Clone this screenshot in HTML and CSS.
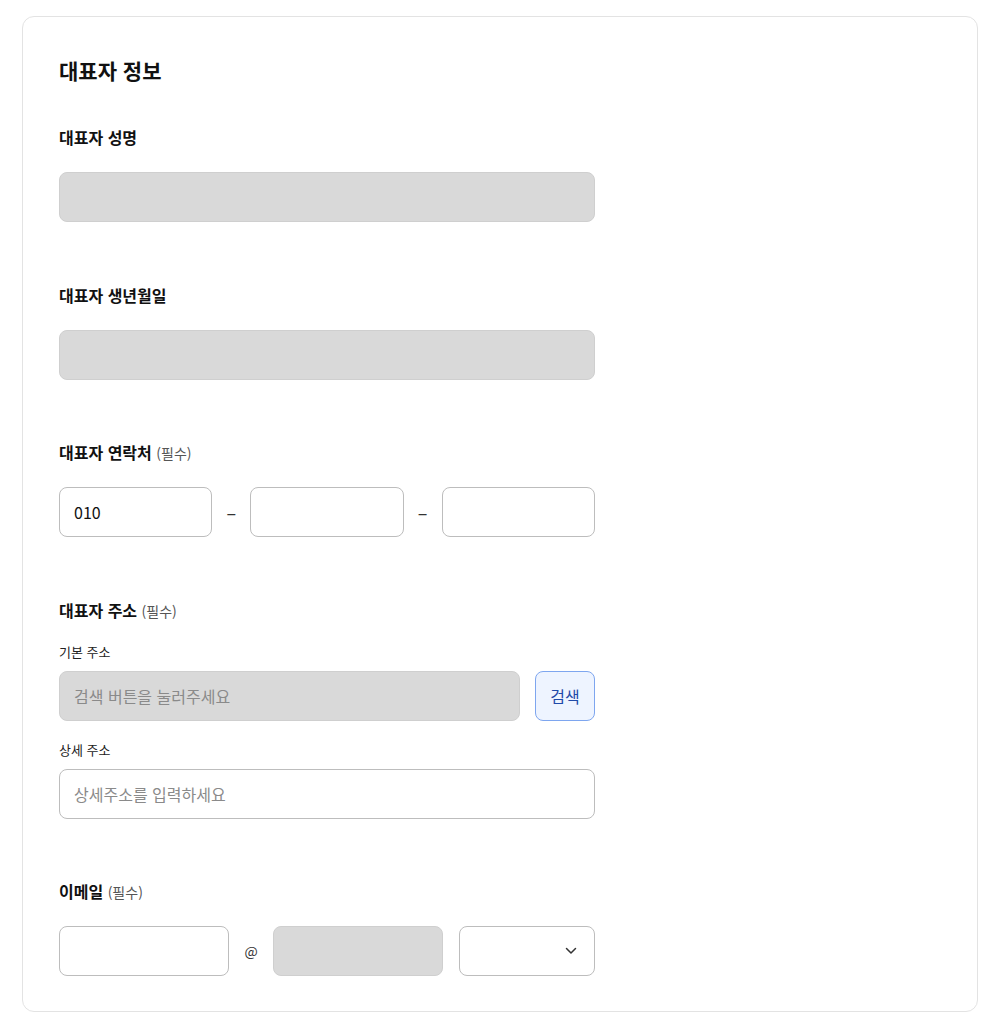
FILE: index.html
```html
<!DOCTYPE html>
<html lang="ko">
<head>
<meta charset="utf-8">
<title>대표자 정보</title>
<link rel="stylesheet" href="styles.css">
</head>
<body>
<div class="card">
  <h2 class="title">대표자 정보</h2>
  <div class="form">
    <div class="section">
      <div class="label">대표자 성명</div>
      <div class="field disabled"></div>
    </div>
    <div class="section">
      <div class="label">대표자 생년월일</div>
      <div class="field disabled"></div>
    </div>
    <div class="section">
      <div class="label">대표자 연락처 <span class="req">(필수)</span></div>
      <div class="phone-row">
        <div class="field">010</div>
        <div class="sep">–</div>
        <div class="field"></div>
        <div class="sep">–</div>
        <div class="field"></div>
      </div>
    </div>
    <div class="section">
      <div class="label">대표자 주소 <span class="req">(필수)</span></div>
      <div class="sublabel">기본 주소</div>
      <div class="addr-row">
        <div class="field disabled placeholder">검색 버튼을 눌러주세요</div>
        <div class="search-btn">검색</div>
      </div>
      <div class="sublabel second">상세 주소</div>
      <div class="field placeholder">상세주소를 입력하세요</div>
    </div>
    <div class="section">
      <div class="label">이메일 <span class="req">(필수)</span></div>
      <div class="email-row">
        <div class="field"></div>
        <div class="at">@</div>
        <div class="field disabled"></div>
        <div class="field select">
          <svg class="chev" width="12" height="8" viewBox="0 0 12 8"><path d="M1.5 1.5 L6 6 L10.5 1.5" fill="none" stroke="#333" stroke-width="1.5" stroke-linecap="round" stroke-linejoin="round"/></svg>
        </div>
      </div>
    </div>
  </div>
</div>
</body>
</html>
```
FILE: styles.css
```css
* { box-sizing: border-box; }
html, body { margin: 0; background: #ffffff; }
body {
  padding: 16px 22px 20px;
  font-family: "Noto Sans CJK KR", "Noto Sans", sans-serif;
  color: #111111;
}
.card {
  border: 1px solid #e3e3e3;
  border-radius: 12px;
  padding: 39px 36px 35px;
}
.title {
  margin: 0 0 42px;
  font-size: 21px;
  line-height: 28px;
  font-weight: 700;
}
.form {
  width: 536px;
  display: flex;
  flex-direction: column;
  gap: 61.5px;
}
.section { display: flex; flex-direction: column; }
.label {
  font-size: 16px;
  line-height: 22px;
  height: 22px;
  font-weight: 700;
  margin-bottom: 24px;
}
.req {
  font-size: 14px;
  line-height: 1;
  font-weight: 400;
  color: #555555;
}
.sublabel {
  font-size: 13px;
  line-height: 18px;
  height: 18px;
  color: #222222;
  margin: -2px 0 10px;
}
.sublabel.second { margin-top: 20px; }
.field {
  height: 50px;
  border: 1px solid #bdbdbd;
  border-radius: 8px;
  background: #ffffff;
  padding: 0 14px;
  display: flex;
  align-items: center;
  font-size: 16px;
  color: #111111;
}
.field.disabled {
  background: #d9d9d9;
  border-color: #cfcfcf;
}
.placeholder { color: #8a8a8a; }
.phone-row {
  display: grid;
  grid-template-columns: 1fr 38px 1fr 38px 1fr;
}
.sep {
  display: flex;
  align-items: center;
  justify-content: center;
  font-size: 18px;
  color: #333333;
}
.addr-row {
  display: flex;
  gap: 15px;
}
.addr-row .field { flex: 1; }
.search-btn {
  width: 60px;
  height: 50px;
  border: 1px solid #7ea6ef;
  border-radius: 8px;
  background: #eef4ff;
  color: #1f4aa8;
  font-size: 16px;
  display: flex;
  align-items: center;
  justify-content: center;
}
.email-row {
  display: grid;
  grid-template-columns: 170px 44px 170px 152px;
}
.email-row .select {
  margin-left: 16px;
  justify-content: flex-end;
  padding-right: 17px;
}
.at {
  display: flex;
  align-items: center;
  justify-content: center;
  font-size: 14px;
  color: #333333;
}
```
